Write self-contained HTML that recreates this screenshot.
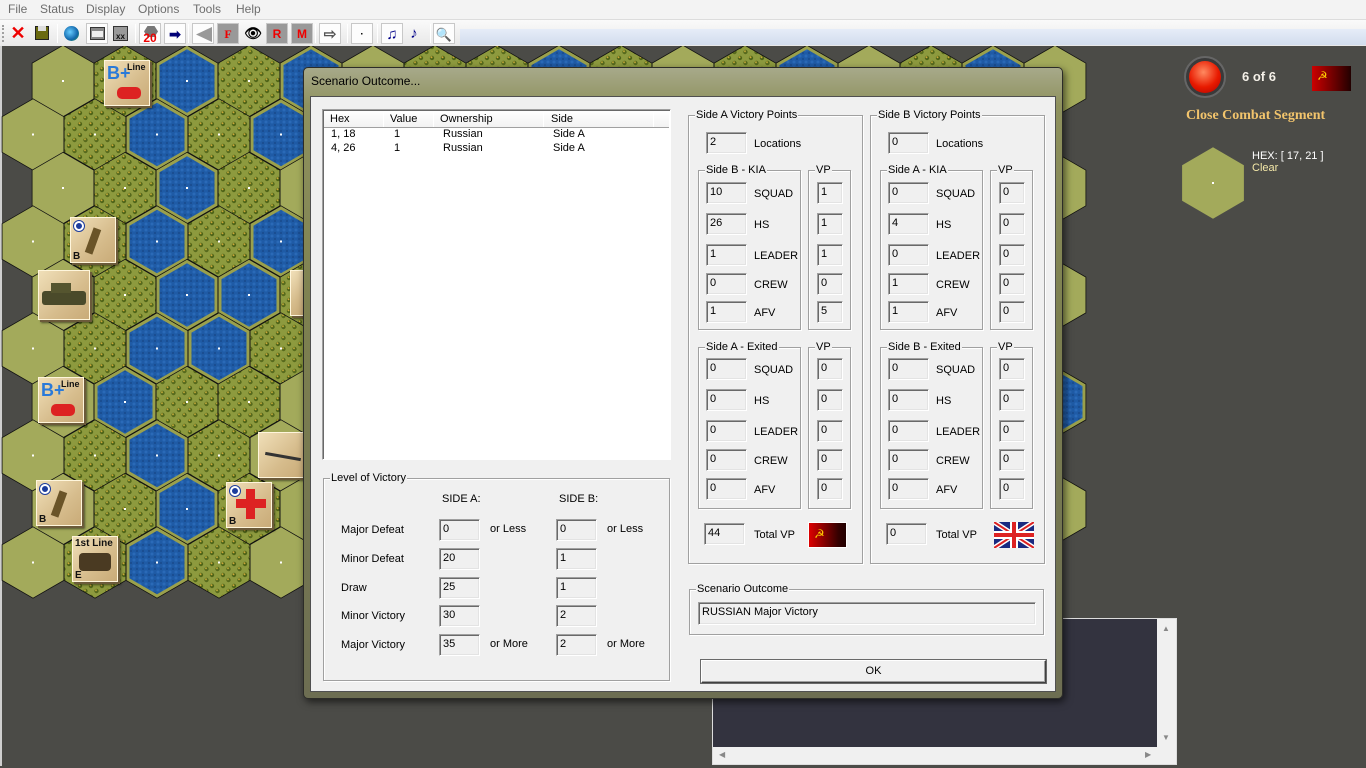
<!DOCTYPE html>
<html><head><meta charset="utf-8"><style>
*{margin:0;padding:0;box-sizing:border-box}
body{width:1366px;height:768px;overflow:hidden;background:#f0f0f0;font-family:"Liberation Sans",sans-serif;position:relative}
.a{position:absolute}
#menu{left:0;top:0;width:1366px;height:19px;background:#f3f3f3;font-size:12px;color:#6e6e6e}
#menu span{position:absolute;top:2px}
#tb{left:0;top:19px;width:1366px;height:27px;background:linear-gradient(#fafafa,#e8e8e8);border-top:1px solid #dcdcdc}
.ti{position:absolute;top:3px;width:22px;height:21px;font-size:12px;font-weight:bold;text-align:center;line-height:21px}
.sep{position:absolute;top:4px;width:1px;height:19px;background:#b0b0b0;border-right:1px solid #fff}
.pr{border:1px solid #c8c8c8;background:#fdfdfd}
#map{left:0;top:46px;width:1366px;height:722px;background:#4b4b47}
#dlg{left:303px;top:67px;width:760px;height:632px;border:1px solid #2c2c28;border-radius:5px;background:linear-gradient(180deg,#a7a98a 0%,#8f925e 6%,#7d8050 40%,#6d6e52 100%);box-shadow:2px 3px 8px rgba(0,0,0,.6)}
#cl{left:6px;top:28px;width:746px;height:596px;background:#f0f0f0;border:1px solid #505050}
.f{font-size:11px;color:#000;position:absolute;white-space:nowrap}
.bx{position:absolute;height:22px;background:#f0f0f0;border:1px solid;border-color:#a0a0a0 #fff #fff #a0a0a0;box-shadow:inset 1px 1px 0 #696969,inset -1px -1px 0 #e3e3e3;font-size:11px;padding:3px 0 0 3px}
.gb{position:absolute;border:1px solid #a0a0a0;box-shadow:1px 1px 0 #fff,inset 1px 1px 0 #fff}
.gl{position:absolute;top:-7px;left:6px;background:#f0f0f0;padding:0 1px;font-size:11px;line-height:13px}
.ctr{position:absolute;width:46px;height:46px;background:linear-gradient(135deg,#f0dfb8,#d6bc8c 60%,#c9ab78);border:1px solid #fff6dc;box-shadow:2px 2px 0 #6b5a3a,3px 3px 2px rgba(0,0,0,.5);font:bold 10px "Liberation Sans",sans-serif;color:#111}
</style></head><body>
<div id="menu" class="a"><span style="left:8px">File</span><span style="left:40px">Status</span><span style="left:86px">Display</span><span style="left:138px">Options</span><span style="left:193px">Tools</span><span style="left:236px">Help</span></div>
<div id="tb" class="a">
<div class="a" style="left:460px;top:9px;width:906px;height:16px;background:linear-gradient(#e6edf8,#d2dded)"></div>
<div class="a" style="left:2px;top:5px;width:2px;height:17px;border-left:2px dotted #a0a0a0"></div>
<div class="ti" style="left:7px;color:#e00;font-size:18px;line-height:20px">✕</div>
<div class="ti" style="left:31px"><div class="a" style="left:4px;top:3px;width:14px;height:14px;background:#6a6a10;border:1px solid #222"></div><div class="a" style="left:7px;top:3px;width:8px;height:5px;background:#ddd"></div></div>
<div class="sep" style="left:57px"></div>
<div class="ti" style="left:61px"><div class="a" style="left:3px;top:3px;width:15px;height:15px;border-radius:50%;background:radial-gradient(circle at 40% 40%,#6cf,#16a 60%,#3a3)"></div></div>
<div class="ti pr" style="left:86px"><div class="a" style="left:3px;top:3px;width:15px;height:13px;background:#888;border:1px solid #333"></div><div class="a" style="left:5px;top:7px;width:11px;height:6px;background:#eee"></div></div>
<div class="ti" style="left:110px"><div class="a" style="left:3px;top:3px;width:15px;height:15px;background:#999;border:1px solid #333;font-size:8px;line-height:20px;color:#111">xx</div></div>
<div class="sep" style="left:135px"></div>
<div class="ti pr" style="left:139px;color:#e00;font-size:12px;line-height:28px"><div class="a" style="left:4px;top:2px;width:14px;height:11px;background:#777;clip-path:polygon(25% 0,75% 0,100% 50%,75% 100%,25% 100%,0 50%)"></div><span style="position:relative">20</span></div>
<div class="ti pr" style="left:164px;color:#007;font-size:14px">➡</div>
<div class="sep" style="left:188px"></div>
<div class="ti pr" style="left:192px"><div class="a" style="left:3px;top:3px;width:16px;height:15px;background:#999;clip-path:polygon(100% 0,100% 100%,0 50%)"></div></div>
<div class="ti pr" style="left:217px;font-family:'Liberation Serif';color:#e00;background:#999">F</div>
<div class="ti" style="left:242px;font-size:14px">👁</div>
<div class="ti pr" style="left:266px;color:#e00;background:#999">R</div>
<div class="ti pr" style="left:291px;color:#e00;background:#999">M</div>
<div class="sep" style="left:315px"></div>
<div class="ti pr" style="left:319px;font-size:15px;color:#555">⇨</div>
<div class="sep" style="left:347px"></div>
<div class="ti pr" style="left:351px;font-size:10px">·</div>
<div class="sep" style="left:377px"></div>
<div class="ti pr" style="left:381px;color:#008;font-size:15px">♫</div>
<div class="ti" style="left:403px;color:#008;font-size:15px">♪</div>
<div class="sep" style="left:430px"></div>
<div class="ti pr" style="left:433px;font-size:13px;color:#0aa">🔍</div>
</div>
<div id="map" class="a">
<div class="a" style="left:0;top:0;width:2px;height:720px;background:#cfcfcf"></div>
<svg id="hx" class="a" style="left:0;top:0" width="1366" height="722" viewBox="0 46 1366 722"></svg>
</div>
<!-- counters -->
<div class="ctr" style="left:104px;top:60px"><span class="a" style="left:22px;top:1px;font-size:9px">Line</span><span class="a" style="left:2px;top:2px;color:#2a7ad8;font-size:18px">B+</span><div class="a" style="left:12px;top:26px;width:24px;height:12px;background:#d22;border-radius:5px"></div></div>
<div class="ctr" style="left:70px;top:217px"><div class="a" style="left:3px;top:3px;width:10px;height:10px;border-radius:50%;background:#1c3c9c;border:2px solid #fff;box-shadow:0 0 0 1px #1c3c9c"></div><div class="a" style="left:18px;top:10px;width:8px;height:26px;background:#6a5428;transform:rotate(20deg)"></div><span class="a" style="left:2px;top:33px">B</span></div>
<div class="ctr" style="left:38px;top:270px;width:52px;height:50px"><div class="a" style="left:3px;top:20px;width:44px;height:14px;background:#4a4a2a;border-radius:3px"></div><div class="a" style="left:12px;top:12px;width:20px;height:10px;background:#55552f"></div></div>
<div class="ctr" style="left:290px;top:270px;width:14px"></div>
<div class="ctr" style="left:38px;top:377px"><span class="a" style="left:22px;top:1px;font-size:9px">Line</span><span class="a" style="left:2px;top:2px;color:#2a7ad8;font-size:18px">B+</span><div class="a" style="left:12px;top:26px;width:24px;height:12px;background:#d22;border-radius:5px"></div></div>
<div class="ctr" style="left:258px;top:432px"><div class="a" style="left:6px;top:22px;width:36px;height:3px;background:#333;transform:rotate(10deg)"></div></div>
<div class="ctr" style="left:36px;top:480px"><div class="a" style="left:3px;top:3px;width:10px;height:10px;border-radius:50%;background:#1c3c9c;border:2px solid #fff;box-shadow:0 0 0 1px #1c3c9c"></div><div class="a" style="left:18px;top:10px;width:8px;height:26px;background:#6a5428;transform:rotate(20deg)"></div><span class="a" style="left:2px;top:33px">B</span></div>
<div class="ctr" style="left:226px;top:482px"><div class="a" style="left:3px;top:3px;width:10px;height:10px;border-radius:50%;background:#1c3c9c;border:2px solid #fff;box-shadow:0 0 0 1px #1c3c9c"></div><div class="a" style="left:19px;top:6px;width:9px;height:30px;background:#d22"></div><div class="a" style="left:9px;top:16px;width:30px;height:9px;background:#d22"></div><span class="a" style="left:2px;top:33px">B</span></div>
<div class="ctr" style="left:72px;top:536px"><span class="a" style="left:2px;top:1px">1st Line</span><div class="a" style="left:6px;top:16px;width:32px;height:18px;background:#4a3a22;border-radius:4px"></div><span class="a" style="left:2px;top:33px">E</span></div>
<!-- right panel -->
<div class="a" style="left:1184px;top:56px;width:42px;height:42px;border-radius:50%;background:#3a3a3a;border:2px solid #666"></div>
<div class="a" style="left:1189px;top:61px;width:32px;height:32px;border-radius:50%;background:radial-gradient(circle at 45% 35%,#ff8a60,#e81a00 55%,#a00)"></div>
<div class="a" style="left:1242px;top:69px;color:#f4f0e8;font:bold 13px 'Liberation Sans',sans-serif">6 of 6</div>
<div class="a" style="left:1312px;top:66px;width:39px;height:25px;background:linear-gradient(90deg,#c00,#200);color:#fc0;font-size:12px;padding:3px 0 0 5px">☭</div>
<div class="a" style="left:1186px;top:108px;color:#f2c46c;font:bold 14px 'Liberation Serif',serif">Close Combat Segment</div>
<div class="a" style="left:1252px;top:150px;color:#fff;font-size:11px">HEX: [ 17, 21 ]</div>
<div class="a" style="left:1252px;top:162px;color:#f4e8a8;font-size:11px">Clear</div>
<!-- dark panel -->
<div class="a" style="left:712px;top:618px;width:465px;height:147px;background:#f0f0f0;border:1px solid #ddd"></div>
<div class="a" style="left:713px;top:619px;width:444px;height:128px;background:#33333f"></div>
<div class="a" style="left:1162px;top:624px;font-size:8px;color:#888">▲</div>
<div class="a" style="left:1162px;top:733px;font-size:8px;color:#888">▼</div>
<div class="a" style="left:719px;top:750px;font-size:8px;color:#888">◀</div>
<div class="a" style="left:1145px;top:750px;font-size:8px;color:#888">▶</div>
<!-- dialog -->
<div id="dlg" class="a">
<div class="a" style="left:7px;top:6px;font-size:12px;color:#000">Scenario Outcome...</div>
<div id="cl" class="a"></div>
</div>
<script>
// hexes
var rows=["CWAWACWWAWCWACWAC","CWAWAWCWAWCAWWCW","CWAWCAWWCWAWCWAWC","CWAWAWCWAWCWAWCW","CWAAWCWAWCWAWCWAC","CWAAWCWAWCWAWCWA","CAWWCWAWCWAWCWAWA","CWAWCWAWCWAWCWAW","CWAWCWAWCWAWCWAWC","CWAWCWAWCWAWCWAW"];
var s=35.7,h='<defs><pattern id="wd" width="11" height="11" patternUnits="userSpaceOnUse"><rect width="11" height="11" fill="#8d9a3e"/><circle cx="3" cy="3" r="2.2" fill="#4f6418"/><circle cx="2.5" cy="2.3" r="1" fill="#c9a83a"/><circle cx="8.5" cy="8" r="2.2" fill="#56691c"/><circle cx="8" cy="7.3" r="1" fill="#b8a438"/></pattern><pattern id="wt" width="6" height="6" patternUnits="userSpaceOnUse"><rect width="6" height="6" fill="#1f5ba6"/><circle cx="2" cy="2" r="1.5" fill="#2a6ab8"/><circle cx="5" cy="5" r="1.2" fill="#1a4e92"/></pattern></defs>';
function poly(cx,cy,r){var p=[];for(var i=0;i<6;i++){var a=Math.PI/180*(60*i-90);p.push((cx+r*Math.cos(a)).toFixed(1)+','+(cy+r*Math.sin(a)).toFixed(1));}return p.join(' ');}
for(var k=0;k<10;k++){var cy=81+53.5*k,x0=k%2?33:63,r=rows[k];for(var j=0;j<r.length;j++){var cx=x0+62*j,t=r[j];
if(t=='C')h+='<polygon points="'+poly(cx,cy,s)+'" fill="#a3aa5b" stroke="#111" stroke-width="0.8"/>';
else if(t=='W')h+='<polygon points="'+poly(cx,cy,s)+'" fill="url(#wd)" stroke="#111" stroke-width="0.8"/>';
else {h+='<polygon points="'+poly(cx,cy,s)+'" fill="#9aa04c" stroke="#111" stroke-width="0.8"/><polygon points="'+poly(cx,cy,s-4)+'" fill="url(#wt)"/>';}
h+='<rect x="'+(cx-1)+'" y="'+(cy-1)+'" width="2" height="2" fill="#fff"/>';}}
h+='<polygon points="'+poly(1213,183,35.7)+'" fill="#a3aa5b"/><rect x="1212" y="182" width="2" height="2" fill="#fff"/>';
document.getElementById('hx').innerHTML=h;
// dialog client content, coords absolute -> subtract (310,96)
var c='';function X(x){return x-310}function Y(y){return y-96}
function bx(x,y,w,t){c+='<div class="bx" style="left:'+X(x)+'px;top:'+Y(y)+'px;width:'+w+'px">'+t+'</div>';}
function tx(x,y,t){c+='<div class="f" style="left:'+X(x)+'px;top:'+Y(y)+'px">'+t+'</div>';}
function gb(x,y,x2,y2,l){c+='<div class="gb" style="left:'+X(x)+'px;top:'+Y(y)+'px;width:'+(x2-x)+'px;height:'+(y2-y)+'px">'+(l?'<div class="gl">'+l+'</div>':'')+'</div>';}
// list
c+='<div class="a" style="left:'+X(321)+'px;top:'+Y(108)+'px;width:349px;height:351px;background:#fff;border:1px solid;border-color:#a0a0a0 #fff #fff #a0a0a0;box-shadow:inset 1px 1px 0 #696969"></div>';
c+='<div class="a" style="left:'+X(323)+'px;top:'+Y(110)+'px;width:345px;height:17px;background:linear-gradient(#fff,#f2f2f2);border-bottom:1px solid #a0a0a0"></div>';
[382,432,542,652].forEach(function(x){c+='<div class="a" style="left:'+X(x)+'px;top:'+Y(111)+'px;width:1px;height:15px;background:#a0a0a0;border-right:1px solid #fff"></div>';});
tx(329,112,'Hex');tx(389,112,'Value');tx(439,112,'Ownership');tx(550,112,'Side');
tx(330,127,'1, 18');tx(393,127,'1');tx(442,127,'Russian');tx(552,127,'Side A');
tx(330,141,'4, 26');tx(393,141,'1');tx(442,141,'Russian');tx(552,141,'Side A');
// level of victory
gb(322,477,669,680,'Level of Victory');
tx(441,492,'SIDE A:');tx(558,492,'SIDE B:');
var lv=[['Major Defeat',518,'0','0','or Less'],['Minor Defeat',547,'20','1',''],['Draw',576,'25','1',''],['Minor Victory',604,'30','2',''],['Major Victory',633,'35','2','or More']];
lv.forEach(function(r){tx(340,r[1]+5,r[0]);bx(438,r[1],41,r[2]);bx(555,r[1],41,r[3]);if(r[4]){tx(489,r[1]+4,r[4]);tx(606,r[1]+4,r[4]);}});
// side groups
function side(ox,title,loc,kt,kia,kvp,et,ex,evp,tot){
 gb(687+ox,114,862+ox,563,title);
 bx(705+ox,131,41,loc);tx(753+ox,137,'Locations');
 var lab=['SQUAD','HS','LEADER','CREW','AFV'];
 gb(697+ox,169,800+ox,329,kt);gb(807+ox,169,850+ox,329,'VP');
 [181,212,243,272,300].forEach(function(y,i){bx(705+ox,y,41,kia[i]);tx(753+ox,y+6,lab[i]);bx(816+ox,y,26,kvp[i]);});
 gb(697+ox,346,800+ox,508,et);gb(807+ox,346,850+ox,508,'VP');
 [357,388,419,448,477].forEach(function(y,i){bx(705+ox,y,41,ex[i]);tx(753+ox,y+6,lab[i]);bx(816+ox,y,26,evp[i]);});
 bx(703+ox,522,41,tot);tx(753+ox,528,'Total VP');
}
side(0,'Side A Victory Points','2','Side B - KIA',['10','26','1','0','1'],['1','1','1','0','5'],'Side A - Exited',['0','0','0','0','0'],['0','0','0','0','0'],'44');
side(182,'Side B Victory Points','0','Side A - KIA',['0','4','0','1','1'],['0','0','0','0','0'],'Side B - Exited',['0','0','0','0','0'],['0','0','0','0','0'],'0');
c+='<div class="a" style="left:'+X(807)+'px;top:'+Y(521)+'px;width:39px;height:26px;background:linear-gradient(90deg,#d00,#300 80%,#200);color:#fc0;font-size:12px;padding:4px 0 0 5px;border:1px solid #fff">☭</div>';
c+='<svg class="a" style="left:'+X(993)+'px;top:'+Y(521)+'px" width="40" height="26" viewBox="0 0 40 26"><rect width="40" height="26" fill="#1a2a80"/><path d="M0 0L40 26M40 0L0 26" stroke="#fff" stroke-width="5"/><path d="M0 0L40 26M40 0L0 26" stroke="#d22" stroke-width="2"/><path d="M20 0V26M0 13H40" stroke="#fff" stroke-width="8"/><path d="M20 0V26M0 13H40" stroke="#d22" stroke-width="4"/></svg>';
gb(688,588,1043,634,'Scenario Outcome');
c+='<div class="bx" style="left:'+X(697)+'px;top:'+Y(601)+'px;width:338px;height:23px;font-size:11px">RUSSIAN Major Victory</div>';
c+='<div class="a" style="left:'+X(700)+'px;top:'+Y(659)+'px;width:345px;height:23px;border:1px solid;border-color:#fff #404040 #404040 #fff;box-shadow:inset -1px -1px 0 #a0a0a0;font-size:11px;text-align:center;line-height:21px;outline:1px solid #696969">OK</div>';
document.getElementById('cl').innerHTML=c;
</script>
</body></html>
